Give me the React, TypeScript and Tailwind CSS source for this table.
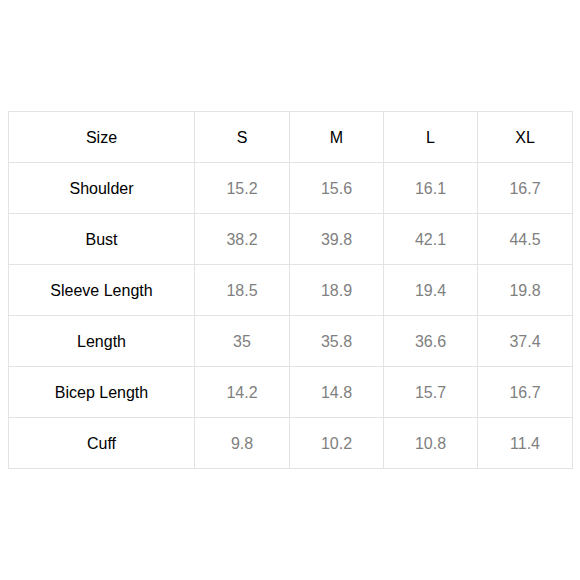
import React from "react";

const sizes = ["S", "M", "L", "XL"];

const rows: { name: string; values: string[] }[] = [
  { name: "Shoulder", values: ["15.2", "15.6", "16.1", "16.7"] },
  { name: "Bust", values: ["38.2", "39.8", "42.1", "44.5"] },
  { name: "Sleeve Length", values: ["18.5", "18.9", "19.4", "19.8"] },
  { name: "Length", values: ["35", "35.8", "36.6", "37.4"] },
  { name: "Bicep Length", values: ["14.2", "14.8", "15.7", "16.7"] },
  { name: "Cuff", values: ["9.8", "10.2", "10.8", "11.4"] },
];

const cell = "border border-[#e3e3e3] text-center pt-[2px]";

const App = () => {
  return (
    <div className="w-[580px] h-[580px] bg-white pt-[111px] pl-[8px] font-['Liberation_Sans',Arial,sans-serif] text-[16px]">
      <table className="border-collapse w-[564px] table-fixed">
        <colgroup>
          <col className="w-[186px]" />
          <col className="w-[95px]" />
          <col className="w-[94px]" />
          <col className="w-[94px]" />
          <col className="w-[95px]" />
        </colgroup>
        <tbody>
          <tr className="h-[51px]">
            <td className={`${cell} text-black`}>Size</td>
            {sizes.map((s) => (
              <td key={s} className={`${cell} text-black`}>
                {s}
              </td>
            ))}
          </tr>
          {rows.map((r) => (
            <tr key={r.name} className="h-[51px]">
              <td className={`${cell} text-black`}>{r.name}</td>
              {r.values.map((v, i) => (
                <td key={i} className={`${cell} text-[#808080]`}>
                  {v}
                </td>
              ))}
            </tr>
          ))}
        </tbody>
      </table>
    </div>
  );
};

export default App;
